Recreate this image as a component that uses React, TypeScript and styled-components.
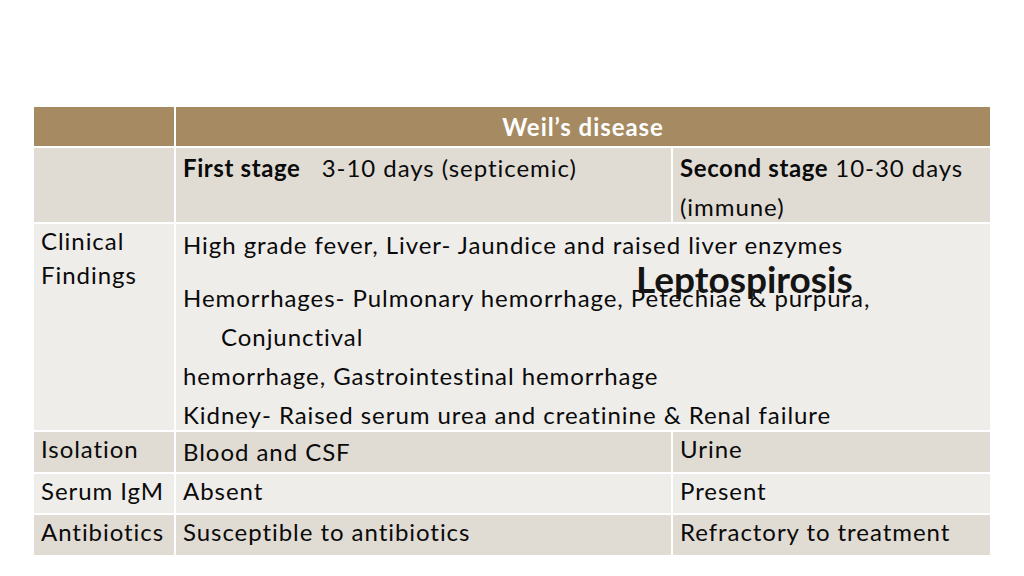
import styled, { createGlobalStyle } from "styled-components";

const GlobalStyle = createGlobalStyle`
	html, body {
		margin: 0;
		padding: 0;
		background: #ffffff;
	}
	body {
		font-family: Lato, "Liberation Sans", sans-serif;
		color: #000000;
	}
`;

const Slide = styled.div`
	position: relative;
	width: 1024px;
	height: 576px;
	overflow: hidden;
	background: #ffffff;
	padding: 107px 0 0 34px;
	box-sizing: border-box;
`;

const Table = styled.div`
	display: grid;
	grid-template-columns: 140px 495px 317px;
	grid-template-rows: 39px 74px 206px 40px 39px 40px;
	column-gap: 2px;
	row-gap: 2px;
	width: 956px;
	background: #ffffff;
`;

const Cell = styled.div<{ tone: "head" | "dark" | "light"; span?: number; lh?: number; pt?: number }>`
	grid-column: span ${(p) => p.span || 1};
	background: ${(p) => (p.tone === "head" ? "#a68b62" : p.tone === "dark" ? "#e0dcd4" : "#efedea")};
	padding: ${(p) => p.pt || 0}px 7px 0 7px;
	font-size: 24px;
	letter-spacing: 0.95px;
	line-height: ${(p) => p.lh || 34}px;
	white-space: nowrap;
	box-sizing: border-box;
	color: #0a0a0a;
`;

const HeadText = styled.div`
	color: #ffffff;
	font-weight: 700;
	text-align: center;
	line-height: 39px;
	font-size: 24px;
`;

const Bold = styled.span`
	font-weight: 700;
	letter-spacing: 0.6px;
`;

const Para = styled.div`
	margin-bottom: 14px;
`;

const Line = styled.div<{ indent?: boolean }>`
	white-space: nowrap;
	padding-left: ${(p) => (p.indent ? "38px" : "0")};
`;

const Title = styled.div`
	position: absolute;
	left: 636px;
	top: 259px;
	font-size: 37px;
	font-weight: 700;
	line-height: 40px;
	color: #141414;
	letter-spacing: 0px;
`;

export default function App() {
	return (
		<Slide>
			<GlobalStyle />
			<Table>
				<Cell tone="head" />
				<Cell tone="head" span={2}>
					<HeadText>Weil’s disease</HeadText>
				</Cell>

				<Cell tone="dark" />
				<Cell tone="dark" lh={39}>
					<Bold>First stage</Bold>&nbsp;&nbsp; 3-10 days (septicemic)
				</Cell>
				<Cell tone="dark" lh={39}>
					<Bold>Second stage</Bold> 10-30 days
					<br />
					(immune)
				</Cell>

				<Cell tone="light">
					Clinical
					<br />
					Findings
				</Cell>
				<Cell tone="light" span={2} lh={39} pt={1}>
					<Para>High grade fever, Liver- Jaundice and raised liver enzymes</Para>
					<Line>Hemorrhages- Pulmonary hemorrhage, Petechiae &amp; purpura,</Line>
					<Line indent>Conjunctival</Line>
					<Line>hemorrhage, Gastrointestinal hemorrhage</Line>
					<Line>Kidney- Raised serum urea and creatinine &amp; Renal failure</Line>
				</Cell>

				<Cell tone="dark">Isolation</Cell>
				<Cell tone="dark" pt={3}>
					Blood and CSF
				</Cell>
				<Cell tone="dark">Urine</Cell>

				<Cell tone="light">Serum IgM</Cell>
				<Cell tone="light">Absent</Cell>
				<Cell tone="light">Present</Cell>

				<Cell tone="dark">Antibiotics</Cell>
				<Cell tone="dark">Susceptible to antibiotics</Cell>
				<Cell tone="dark">Refractory to treatment</Cell>
			</Table>
			<Title>Leptospirosis</Title>
		</Slide>
	);
}
